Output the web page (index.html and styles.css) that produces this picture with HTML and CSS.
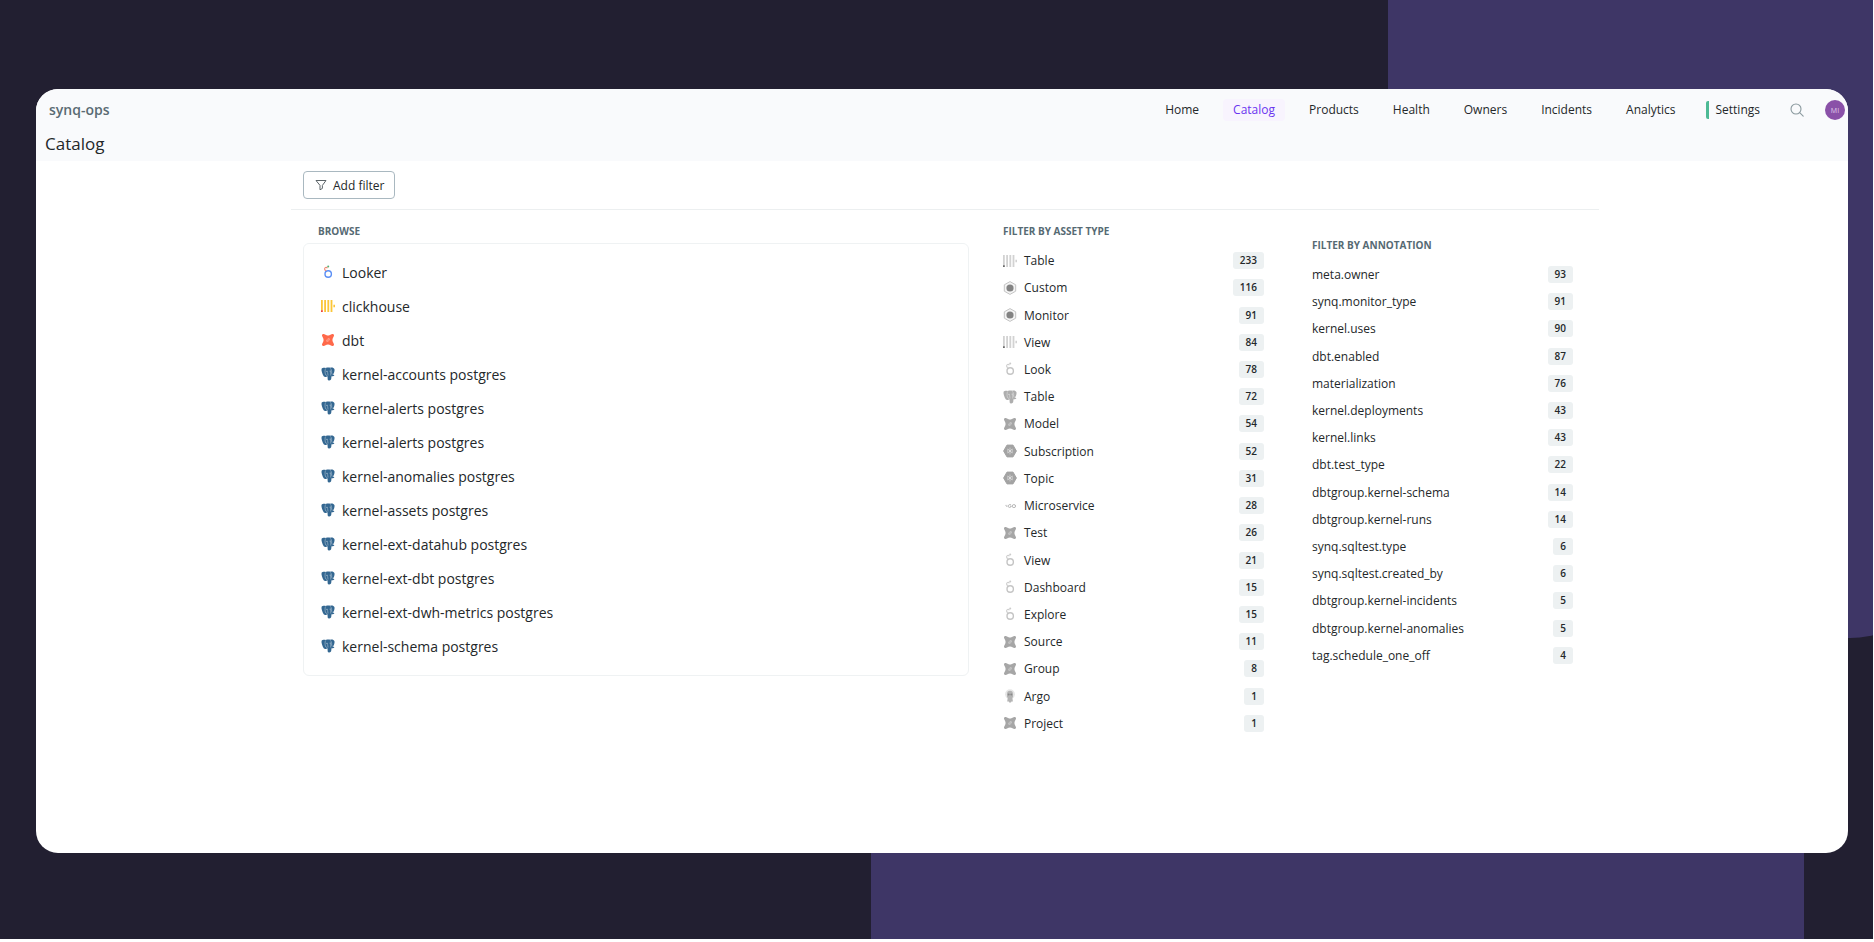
FILE: index.html
```html
<!DOCTYPE html>
<html lang="en">
<head>
    <meta charset="UTF-8">
    <meta name="viewport" content="width=device-width, initial-scale=1.0">
    <title>Catalog | synq-ops</title>
    <link rel="stylesheet" href="styles.css">
</head>
<body>
    <!-- icon sprite -->
    <svg class="sprite" aria-hidden="true">
        <symbol id="looker" viewBox="0 0 14 14">
            <circle class="lk-ring" cx="7.2" cy="9" r="3.2" fill="none" stroke-width="1.4"/>
            <path class="lk-mid" d="M5.3 5.4A1.5 1.5 0 1 1 6.4 3.2" fill="none" stroke-width="1.1"/>
            <circle class="lk-top" cx="7.2" cy="1.6" r="1"/>
        </symbol>
        <symbol id="clickhouse" viewBox="0 0 14 14">
            <path d="M0 1h1.8v10.6H0zM3.2 1h1.8v12H3.2zM6.4 1h1.8v12H6.4zM9.6 1h1.8v12H9.6zM12.4 5.8H14v2.4h-1.6z" fill="currentColor"/>
            <path class="ch-dot" d="M0 11.3h1.8V13H0z"/>
        </symbol>
        <symbol id="dbt" viewBox="0 0 14 14">
            <path d="M1 2.4C1 1.2 2 .7 2.9 1L5.6 2.2Q7 2.8 8.4 2.2L11.1 1C12.4.6 13.4 1.7 12.9 2.9L11.7 5.6Q11.1 7 11.7 8.4L12.9 11.1C13.4 12.3 12.2 13.4 11.1 13L8.4 11.8Q7 11.2 5.6 11.8L2.9 13C1.8 13.4.6 12.3 1.1 11.1L2.3 8.4Q2.9 7 2.3 5.6L1.1 2.9z" fill="currentColor"/>
            <path d="M7.1 5.3 8.7 5.4 8.7 7 7 8.7 5.4 8.6 5.4 7z" fill="#fff" opacity=".45"/>
            <circle cx="7" cy="7" r=".8" fill="currentColor"/>
        </symbol>
        <symbol id="postgres" viewBox="0 0 14 14">
            <path class="pg-body" d="M.6 1.8C1.4.5 3.6.6 4.8 1 6 .4 8 .4 9.2.8 10.8.3 12.8.6 13.5 2.2 13.8 4 12.8 6.3 12 7.6L13.4 8.2C12.9 9 11.8 9.4 10.5 9.2L10.2 12.1C9.9 13.8 7.1 13.9 6.7 12.4L6.5 9.3 5.9 9.4C5 10.2 3.4 10.3 2.7 9.2 1.4 7.2 0 3.4.6 1.8z"/>
            <path d="M4.7 1.4C3.7 3 4.1 5.3 4.3 6.6 4.4 7.6 5 8.4 5.9 8.6M9.3 1.3C10.4 2.6 10.9 4.2 10.6 6.1L11.4 7.6M6.9 8.6C7 6.8 6.6 6.6 6.6 5.2M9.8 8.6C9.3 7.3 10 6 9.7 4.6" fill="none" stroke="#fff" stroke-width=".6" opacity=".6"/>
            <circle cx="6" cy="4.2" r=".5" fill="#fff"/>
            <circle cx="9.2" cy="4" r=".5" fill="#fff"/>
        </symbol>
        <symbol id="custom" viewBox="0 0 14 14">
            <path d="M7 .6 12.7 3.8V10.2L7 13.4 1.3 10.2V3.8z" fill="#f4f4f4" stroke="#c4c4c4"/>
            <circle cx="7" cy="7" r="3.6" fill="#838383"/>
        </symbol>
        <symbol id="pubsub" viewBox="0 0 14 14">
            <path d="M4 1.1H10L13.4 7 10 12.9H4L.6 7z" fill="#a3a3a3" stroke="#a3a3a3" stroke-linejoin="round" stroke-width="1"/>
            <path d="M4.8 4.9V9.1M9.2 4.9V9.1M7 3.6V6M7 8V10.4M4.8 9.1 7 7 9.2 9.1M4.8 4.9 7 7 9.2 4.9" stroke="#d6d6d6" stroke-width=".8" fill="none"/>
            <circle cx="7" cy="7" r="1" fill="#e2e2e2"/>
        </symbol>
        <symbol id="go" viewBox="0 0 14 14">
            <path d="M2.2 6.4H4.4M3 7.5H4.4" stroke="#bbb" stroke-width=".7"/>
            <path d="M8.1 5.9C7 5.1 5.2 5.7 5.2 7.2 5.2 8.9 7.8 9 8.3 7.2H6.9" fill="none" stroke="#b4b4b4" stroke-width="1"/>
            <ellipse cx="10.9" cy="7.1" rx="1.7" ry="1.5" fill="none" stroke="#b4b4b4"/>
        </symbol>
        <symbol id="argo" viewBox="0 0 14 14">
            <circle cx="7" cy="5.2" r="4.9" fill="#e6e6e6"/>
            <path d="M4 5.2a3 3.4 0 0 1 6 0v2.6L9.4 9l.5 3.6H8.4L8 13.6H6.2l-.4-1H4.2L4.7 9 4 7.8z" fill="#b4b4b4"/>
            <circle cx="5.7" cy="5.5" r="1" fill="#888"/>
            <circle cx="8.3" cy="5.5" r="1" fill="#888"/>
        </symbol>
    </svg>

    <div class="stage">
        <div class="shape shape-top"></div>
        <div class="shape shape-bottom"></div>

        <div class="window">
            <header class="header">
                <div class="topbar">
                    <a class="workspace" href="#">synq-ops</a>
                    <nav class="nav">
                        <a href="#">Home</a>
                        <a href="#" class="active">Catalog</a>
                        <a href="#">Products</a>
                        <a href="#">Health</a>
                        <a href="#">Owners</a>
                        <a href="#">Incidents</a>
                        <a href="#">Analytics</a>
                        <a href="#" class="settings">Settings</a>
                    </nav>
                    <button class="search" type="button" aria-label="Search">
                        <svg viewBox="0 0 14 14" width="14" height="14" fill="none" stroke="#8a999e" stroke-width="1.1" stroke-linecap="round"><circle cx="6" cy="6" r="5"/><path d="M9.7 9.7 13.2 13.2"/></svg>
                    </button>
                    <button class="avatar" type="button">MI</button>
                </div>
                <h1>Catalog</h1>
            </header>

            <main class="content">
                <div class="filter-bar">
                    <button class="add-filter" type="button">
                        <svg viewBox="0 0 12 12" width="12" height="12" fill="none" stroke="#5c6468" stroke-linejoin="round"><path d="M1 1.5H11L7.4 6.4V9.4L5 10.8V6.4z"/></svg>
                        Add filter
                    </button>
                </div>

                <div class="columns">
                    <section class="browse">
                        <h2>BROWSE</h2>
                        <ul class="browse-list">
                            <li><a href="#"><svg class="icon"><use href="#looker"/></svg>Looker</a></li>
                            <li><a href="#"><svg class="icon clickhouse"><use href="#clickhouse"/></svg>clickhouse</a></li>
                            <li><a href="#"><svg class="icon dbt"><use href="#dbt"/></svg>dbt</a></li>
                            <li><a href="#"><svg class="icon"><use href="#postgres"/></svg>kernel-accounts postgres</a></li>
                            <li><a href="#"><svg class="icon"><use href="#postgres"/></svg>kernel-alerts postgres</a></li>
                            <li><a href="#"><svg class="icon"><use href="#postgres"/></svg>kernel-alerts postgres</a></li>
                            <li><a href="#"><svg class="icon"><use href="#postgres"/></svg>kernel-anomalies postgres</a></li>
                            <li><a href="#"><svg class="icon"><use href="#postgres"/></svg>kernel-assets postgres</a></li>
                            <li><a href="#"><svg class="icon"><use href="#postgres"/></svg>kernel-ext-datahub postgres</a></li>
                            <li><a href="#"><svg class="icon"><use href="#postgres"/></svg>kernel-ext-dbt postgres</a></li>
                            <li><a href="#"><svg class="icon"><use href="#postgres"/></svg>kernel-ext-dwh-metrics postgres</a></li>
                            <li><a href="#"><svg class="icon"><use href="#postgres"/></svg>kernel-schema postgres</a></li>
                        </ul>
                    </section>

                    <section class="filters">
                        <h2>FILTER BY ASSET TYPE</h2>
                        <ul class="filter-list asset-types">
                            <li><a href="#"><svg class="icon"><use href="#clickhouse"/></svg>Table <span class="count">233</span></a></li>
                            <li><a href="#"><svg class="icon"><use href="#custom"/></svg>Custom <span class="count">116</span></a></li>
                            <li><a href="#"><svg class="icon"><use href="#custom"/></svg>Monitor <span class="count">91</span></a></li>
                            <li><a href="#"><svg class="icon"><use href="#clickhouse"/></svg>View <span class="count">84</span></a></li>
                            <li><a href="#"><svg class="icon"><use href="#looker"/></svg>Look <span class="count">78</span></a></li>
                            <li><a href="#"><svg class="icon"><use href="#postgres"/></svg>Table <span class="count">72</span></a></li>
                            <li><a href="#"><svg class="icon dbt"><use href="#dbt"/></svg>Model <span class="count">54</span></a></li>
                            <li><a href="#"><svg class="icon"><use href="#pubsub"/></svg>Subscription <span class="count">52</span></a></li>
                            <li><a href="#"><svg class="icon"><use href="#pubsub"/></svg>Topic <span class="count">31</span></a></li>
                            <li><a href="#"><svg class="icon"><use href="#go"/></svg>Microservice <span class="count">28</span></a></li>
                            <li><a href="#"><svg class="icon dbt"><use href="#dbt"/></svg>Test <span class="count">26</span></a></li>
                            <li><a href="#"><svg class="icon"><use href="#looker"/></svg>View <span class="count">21</span></a></li>
                            <li><a href="#"><svg class="icon"><use href="#looker"/></svg>Dashboard <span class="count">15</span></a></li>
                            <li><a href="#"><svg class="icon"><use href="#looker"/></svg>Explore <span class="count">15</span></a></li>
                            <li><a href="#"><svg class="icon dbt"><use href="#dbt"/></svg>Source <span class="count">11</span></a></li>
                            <li><a href="#"><svg class="icon dbt"><use href="#dbt"/></svg>Group <span class="count">8</span></a></li>
                            <li><a href="#"><svg class="icon"><use href="#argo"/></svg>Argo <span class="count">1</span></a></li>
                            <li><a href="#"><svg class="icon dbt"><use href="#dbt"/></svg>Project <span class="count">1</span></a></li>
                        </ul>
                    </section>

                    <section class="filters annotations">
                        <h2>FILTER BY ANNOTATION</h2>
                        <ul class="filter-list annotation-list">
                            <li><a href="#">meta.owner <span class="count">93</span></a></li>
                            <li><a href="#">synq.monitor_type <span class="count">91</span></a></li>
                            <li><a href="#">kernel.uses <span class="count">90</span></a></li>
                            <li><a href="#">dbt.enabled <span class="count">87</span></a></li>
                            <li><a href="#">materialization <span class="count">76</span></a></li>
                            <li><a href="#">kernel.deployments <span class="count">43</span></a></li>
                            <li><a href="#">kernel.links <span class="count">43</span></a></li>
                            <li><a href="#">dbt.test_type <span class="count">22</span></a></li>
                            <li><a href="#">dbtgroup.kernel-schema <span class="count">14</span></a></li>
                            <li><a href="#">dbtgroup.kernel-runs <span class="count">14</span></a></li>
                            <li><a href="#">synq.sqltest.type <span class="count">6</span></a></li>
                            <li><a href="#">synq.sqltest.created_by <span class="count">6</span></a></li>
                            <li><a href="#">dbtgroup.kernel-incidents <span class="count">5</span></a></li>
                            <li><a href="#">dbtgroup.kernel-anomalies <span class="count">5</span></a></li>
                            <li><a href="#">tag.schedule_one_off <span class="count">4</span></a></li>
                        </ul>
                    </section>
                </div>
            </main>
        </div>
    </div>
</body>
</html>
```
FILE: styles.css
```css
* {
    box-sizing: border-box;
}

body {
    margin: 0;
    padding: 0 1px 3px 0;
    min-height: 100vh;
    display: flex;
    background: #fff;
    color: #24282a;
    font-family: "Open Sans", "Noto Sans", sans-serif;
    font-size: 12px;
}

a {
    color: inherit;
    text-decoration: none;
}

button {
    font-family: inherit;
    cursor: pointer;
}

ul {
    list-style: none;
    margin: 0;
    padding: 0;
}

.sprite {
    position: absolute;
    width: 0;
    height: 0;
}

/* dark backdrop with the two purple shapes */
.stage {
    position: relative;
    flex: 1;
    display: flex;
    padding: 89px 25px 86px 36px;
    background: #221f31;
    overflow: hidden;
}

.shape {
    position: absolute;
    background: #3e3666;
}

.shape-top {
    top: 0;
    right: -77px;
    width: 562px;
    height: 638px;
    border-radius: 0 0 100px 0;
}

.shape-bottom {
    right: 69px;
    bottom: 0;
    width: 933px;
    height: 400px;
}

.window {
    position: relative;
    flex: 1;
    background: #fff;
    border-radius: 22px;
    overflow: hidden;
}

.header {
    height: 72px;
    background: #f9fafc;
}

.topbar {
    display: flex;
    align-items: center;
    height: 42px;
    padding: 0 3px 0 13px;
}

.workspace {
    margin-right: auto;
    color: #5a6b73;
    font-size: 14px;
    font-weight: 600;
    line-height: 20px;
}

.nav {
    display: flex;
    gap: 14px;
}

.nav a {
    padding: 2px 10px;
    border-radius: 4px;
    line-height: 18px;
}

.nav .active {
    color: #6a35f0;
    background: #f8f4fe;
}

.nav .settings {
    margin-left: 6px;
    padding: 0 10px 0 7px;
    border-left: 3px solid #4dba95;
    border-radius: 2px;
    line-height: 18px;
    align-self: center;
}

.search {
    display: flex;
    margin: 0 21px 0 20px;
    padding: 0;
    border: none;
    background: none;
}

.avatar {
    width: 20px;
    height: 20px;
    padding: 0;
    border: none;
    border-radius: 50%;
    background: #8a51a8;
    color: #e0cdea;
    font-size: 7px;
}

h1 {
    margin: 0;
    padding-left: 9px;
    font-size: 17px;
    font-weight: 400;
    line-height: 26px;
}

.content {
    margin: 0 249px 0 255px;
}

.filter-bar {
    padding: 10px 12px;
    border-bottom: 1px solid #eceff0;
}

.add-filter {
    display: flex;
    align-items: center;
    gap: 6px;
    height: 28px;
    padding: 0 10px 0 11px;
    border: 1px solid #a9b8c0;
    border-radius: 4px;
    background: #fff;
    color: #24282a;
    font-size: 12px;
}

.columns {
    display: flex;
    align-items: flex-start;
    gap: 34px;
    padding: 13px 26px 0 12px;
}

h2 {
    margin: 0;
    color: #566a73;
    font-size: 10px;
    font-weight: 700;
    line-height: 16px;
}

.browse {
    flex: 666 1 0;
}

.browse h2 {
    padding-left: 15px;
}

.browse-list {
    margin-top: 4px;
    padding: 11px 17px 12px;
    border: 1px solid #eff2f3;
    border-radius: 6px;
}

.browse-list a {
    display: flex;
    align-items: center;
    gap: 7px;
    height: 34px;
    font-size: 14px;
}

.icon {
    width: 14px;
    height: 14px;
    flex: none;
}

.clickhouse {
    color: #fbc638;
}

.dbt {
    color: #ff694a;
}

.lk-ring {
    stroke: #5b8ff5;
}

.lk-mid {
    stroke: #ef8a75;
}

.lk-top {
    fill: #58b071;
}

.ch-dot {
    fill: #f0433a;
}

.pg-body {
    fill: #336791;
}

.filters {
    flex: 261 1 0;
}

.annotations {
    margin: 14px 0 0 14px;
}

.filter-list {
    display: grid;
    grid-auto-rows: 1fr;
    margin-top: 8px;
}

.asset-types {
    min-height: 490px;
}

.annotation-list {
    min-height: 408px;
}

.filter-list a {
    display: flex;
    align-items: center;
    gap: 7px;
    height: 100%;
}

.count {
    margin-left: auto;
    padding: 0 7px;
    border-radius: 3px;
    background: #edf1f2;
    font-size: 10px;
    font-weight: 600;
    line-height: 17px;
}

/* muted icons in the filter column */
.asset-types .icon {
    color: #d2d2d2;
    filter: grayscale(1);
}

.asset-types .dbt {
    color: #a6a6a6;
}

.asset-types .icon:has([href="#looker"]),
.asset-types .icon:has([href="#postgres"]) {
    opacity: .5;
}
```
